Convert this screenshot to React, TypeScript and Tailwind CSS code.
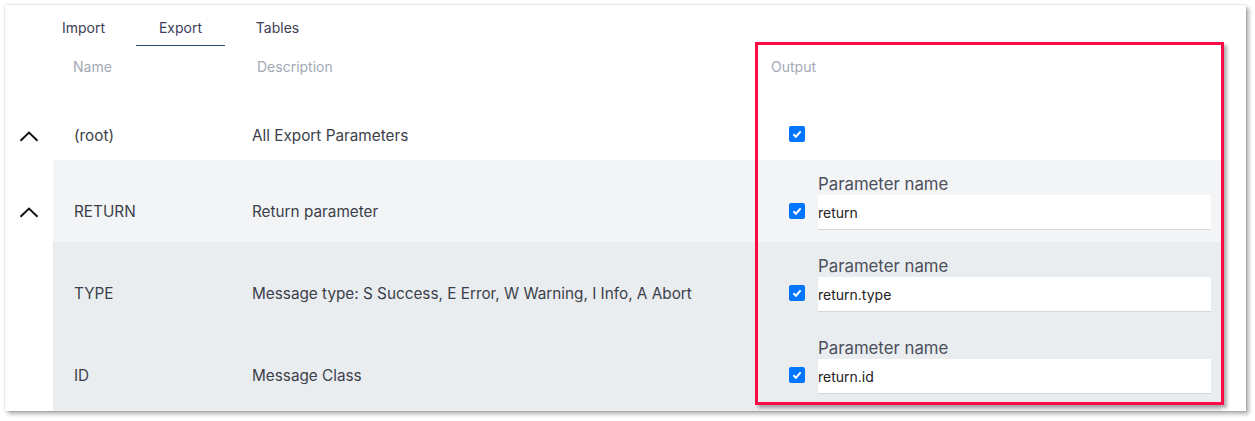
import React from "react";

type Row = {
  name: string;
  desc: string;
  param: string;
  bg: string;
  chevron?: boolean;
};

const rows: Row[] = [
  { name: "RETURN", desc: "Return parameter", param: "return", bg: "bg-[#f3f4f6]", chevron: true },
  { name: "TYPE", desc: "Message type: S Success, E Error, W Warning, I Info, A Abort", param: "return.type", bg: "bg-[#eaedf0]" },
  { name: "ID", desc: "Message Class", param: "return.id", bg: "bg-[#eaedf0]" },
];

function Chevron() {
  return (
    <svg width="20" height="11" viewBox="0 0 20 11" fill="none">
      <path d="M1.5 9.8 L10 1.6 L18.5 9.8" stroke="#111" strokeWidth="2" />
    </svg>
  );
}

function Checkbox() {
  return (
    <span className="flex h-4 w-4 items-center justify-center rounded-[2px] bg-[#0075ff]">
      <svg width="12" height="12" viewBox="0 0 12 12" fill="none">
        <path d="M2.4 6.3 L4.9 8.7 L9.7 3.3" stroke="white" strokeWidth="2" />
      </svg>
    </span>
  );
}

export default function App() {
  return (
    <div className="min-h-screen bg-white pl-[5px] pt-[5px] font-['Inter','Noto_Sans',sans-serif] text-[#3b3f4a]">
      <div className="relative flex h-[406px] w-[1241px] flex-col overflow-hidden bg-white pr-[25px] shadow-[0_0_2px_rgba(0,0,0,0.25),3px_3px_4px_rgba(0,0,0,0.3)]">
        {/* tabs */}
        <div className="flex pl-[30px] text-[14px] leading-[20px]">
          {["Import", "Export", "Tables"].map((t) => (
            <div key={t} className="w-[97px] px-[4px]">
              <div
                className={`border-b pt-[13px] pb-[7px] text-center ${
                  t === "Export" ? "border-[#2c4a6e] text-[#3d3d5c]" : "border-transparent text-[#3d3d55]"
                }`}
              >
                {t}
              </div>
            </div>
          ))}
        </div>

        {/* header */}
        <div className="flex h-[44px] pt-[11px] text-[14px] leading-[20px] text-[#a3a9b5]">
          <div className="w-[48px]" />
          <div className="w-[179px] pl-[20px]">Name</div>
          <div className="w-[523px] pl-[25px]">Description</div>
          <div className="pl-[16px]">Output</div>
        </div>

        {/* root row */}
        <div className="flex h-[70px] items-end pb-[6px] text-[15.3px]">
          <div className="flex h-[35px] w-[48px] items-center justify-center">
            <Chevron />
          </div>
          <div className="flex h-[35px] w-[179px] items-center pl-[21px]">(root)</div>
          <div className="flex h-[35px] w-[523px] items-center pl-[20px]">All Export Parameters</div>
          <div className="flex h-[35px] items-start pl-[34px] pt-[7px]">
            <Checkbox />
          </div>
        </div>

        {rows.map((r, i) => (
          <div key={r.name} className="flex text-[15.3px]">
            <div className="flex w-[48px] items-end pb-[12px]">
              {r.chevron && (
                <div className="flex h-[35px] w-full items-center justify-center">
                  <Chevron />
                </div>
              )}
            </div>
            <div
              className={`flex flex-1 items-end ${r.bg} ${
                i === rows.length - 1 ? "h-[87px] pb-[17px]" : "h-[82px] pb-[12px]"
              }`}
            >
              <div className="flex h-[35px] w-[179px] items-center pl-[21px]">{r.name}</div>
              <div className="flex h-[35px] w-[523px] items-center pl-[20px]">{r.desc}</div>
              <div className="flex flex-1 items-end pl-[34px] pr-[10px]">
                <div className="flex h-[35px] items-start pt-[8px]">
                  <Checkbox />
                </div>
                <div className="ml-[13px] flex flex-1 flex-col">
                  <div className="text-[16.8px] leading-[22px] text-[#4a4f5a]">Parameter name</div>
                  <div className="flex h-[35px] items-center border-b border-[#d4d7dc] bg-white text-[14px] text-[#222]">
                    {r.param}
                  </div>
                </div>
              </div>
            </div>
          </div>
        ))}

        {/* highlight box */}
        <div className="absolute left-[750px] top-[37px] h-[363px] w-[469px] border-[3px] border-[#ff0a45] shadow-[3px_3px_3px_rgba(0,0,0,0.3)]" />
      </div>
    </div>
  );
}
